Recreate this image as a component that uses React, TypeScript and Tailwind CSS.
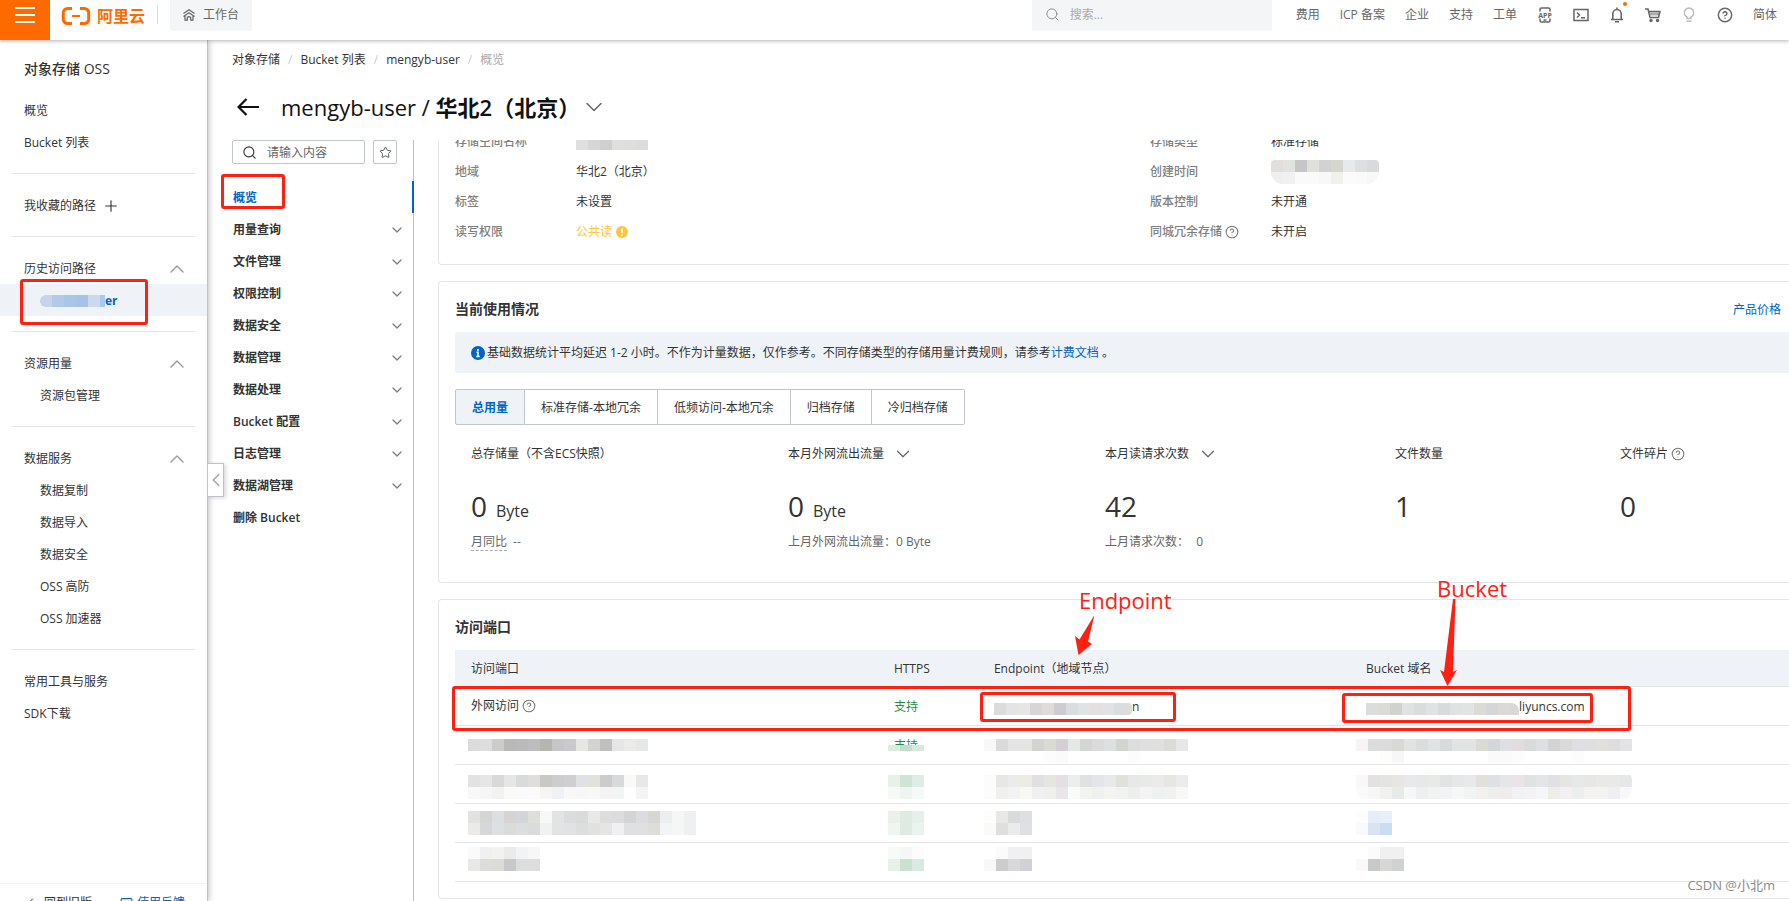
import type { ReactNode } from "react";
import {
  ChevronDown,
  ChevronLeft,
  ChevronUp,
  CircleHelp,
  MessageSquare,
  Plus,
  Search,
  Star,
  Undo2,
} from "lucide-react";

const topLinks = ["费用", "ICP 备案", "企业", "支持", "工单"];

const sideSections = [
  { title: "资源用量", items: ["资源包管理"] },
  { title: "数据服务", items: ["数据复制", "数据导入", "数据安全", "OSS 高防", "OSS 加速器"] },
];

const bucketMenu = [
  "用量查询",
  "文件管理",
  "权限控制",
  "数据安全",
  "数据管理",
  "数据处理",
  "Bucket 配置",
  "日志管理",
  "数据湖管理",
];

const storageTabs = ["总用量", "标准存储-本地冗余", "低频访问-本地冗余", "归档存储", "冷归档存储"];

interface MosaicProps {
  rows: string[];
  height?: number;
  offset?: number;
  className?: string;
}

// each row is a space separated list of 12px block colours, "-" leaves a gap
function Mosaic({ rows, height = 12, offset = 0, className = "" }: MosaicProps) {
  const cells = rows.map((row) => row.split(" "));
  const width = Math.max(...cells.map((row) => row.length)) * 12;
  return (
    <svg
      width={width}
      height={height}
      shapeRendering="crispEdges"
      aria-hidden="true"
      className={`block shrink-0 ${className}`}
    >
      {cells.map((row, y) =>
        row.map((color, x) =>
          color === "-" ? null : (
            <rect key={`${x}-${y}`} x={x * 12} y={offset + y * 12} width={12} height={12} fill={`#${color}`} />
          )
        )
      )}
    </svg>
  );
}

function MaskedCell({ rows, offset, className = "", children }: MosaicProps & { children?: ReactNode }) {
  return (
    <td className="relative h-[39px] border-b border-[#e3e4e6] p-0 pl-4">
      {children}
      <Mosaic rows={rows} offset={offset} height={38} className={`absolute top-0 ${className}`} />
    </td>
  );
}

function Help() {
  return <CircleHelp size={14} strokeWidth={1.8} className="ml-[3px] shrink-0 text-[#777]" />;
}

function MarkBox({ className }: { className: string }) {
  return <span className={`pointer-events-none absolute rounded-[3px] border-3 border-[#ff2012] ${className}`} />;
}

function TopBar() {
  return (
    <header className="relative z-20 flex h-10 shrink-0 items-start bg-white pr-3 text-[#666] shadow-[0_1px_4px_rgba(0,0,0,0.3)]">
      <button aria-label="菜单" className="flex h-10 w-[50px] items-start justify-center bg-[#ff6a00] pt-[6px]">
        <svg width="20" height="18" viewBox="0 0 20 18" stroke="#fff" strokeWidth="2">
          <path d="M0 2h20M0 9h20M0 16h20" />
        </svg>
      </button>
      <a href="#" className="ml-[11px] mt-1 flex h-6 items-center gap-[6px] text-[#ff6a00]">
        <svg width="30" height="20" viewBox="0 0 30 20" fill="none" stroke="currentColor">
          <path
            strokeWidth="3"
            d="M11 2.500H6.500Q3.200 2.800 2.300 6v8q.9 3.200 4.200 3.500H11M19 2.500h4.500q3.300.3 4.200 3.500v8q-.9 3.200-4.200 3.500H19"
          />
          <path strokeWidth="2" d="M11 10h8" />
        </svg>
        <span className="text-base font-bold leading-6">阿里云</span>
      </a>
      <span className="ml-3 mt-[6px] h-[18px] w-px bg-[#ddd]" />
      <button className="ml-3 flex h-[31px] w-[82px] items-center justify-center gap-2 rounded-b-[2px] bg-[#f4f5f7] pb-[2px]">
        <svg width="12" height="12" viewBox="0 0 12 12" fill="none" stroke="currentColor" strokeWidth="1.200">
          <path d="M.5 4.500 6 .7l5.500 3.800M.5 7.500 6 3.700l5.500 3.800M2 6.500v4.700h2.300V8.500q1.700-1.800 3.400 0v2.700H10V6.500" />
        </svg>
        工作台
      </button>
      <label className="ml-auto flex h-[31px] w-60 items-center gap-[10px] bg-[#f4f5f7] pb-[2px] pl-[13px]">
        <Search size={15} strokeWidth={1.5} className="shrink-0 text-[#888]" />
        <input
          aria-label="搜索"
          placeholder="搜索..."
          className="w-full bg-transparent outline-none placeholder:text-[#aaa]"
        />
      </label>
      <nav className="ml-6 flex h-[31px] items-center gap-5 pb-[2px]">
        {topLinks.map((label) => (
          <a key={label} href="#">
            {label}
          </a>
        ))}
        <button aria-label="APP">
          <svg width="16" height="16" viewBox="0 0 16 16" fill="none" stroke="currentColor" strokeWidth="1.500">
            <path d="M3 4.500V2.500Q3 1 4.500 1h7Q13 1 13 2.500v2M3 11.500v2Q3 15 4.500 15h7q1.500 0 1.500-1.500v-2M6.500 13h3" />
            <text x="8" y="10.500" fontSize="7" fontWeight="700" textAnchor="middle" fill="currentColor" stroke="none">
              APP
            </text>
          </svg>
        </button>
        <button aria-label="Cloud Shell">
          <svg width="16" height="16" viewBox="0 0 16 16" fill="none" stroke="currentColor" strokeWidth="1.500">
            <path d="M1 2.500h14v11H1zM4 5.500 6.500 8 4 10.500M8 10.700h4" />
          </svg>
        </button>
        <button aria-label="消息" className="relative">
          <svg width="16" height="16" viewBox="0 0 16 16" fill="none" stroke="currentColor" strokeWidth="1.600">
            <path d="M8 .5v2M2 12.500h12M3.800 12.500V7a4.200 4.500 0 0 1 8.400 0v5.500M6 14.800h4" />
          </svg>
          <span className="absolute -top-[5px] left-[14px] size-1 rounded-full bg-[#ff6a00]" />
        </button>
        <button aria-label="购物车">
          <svg width="16" height="16" viewBox="0 0 16 16" fill="none" stroke="currentColor" strokeWidth="1.500">
            <path d="M0 2h3l2 8.500h8.500L15 4.500H3.800" />
            <path d="M4.500 7h9.500" strokeWidth="3" opacity=".55" />
            <circle cx="6" cy="13.500" r="1" fill="currentColor" />
            <circle cx="12.500" cy="13.500" r="1" fill="currentColor" />
          </svg>
        </button>
        <button aria-label="提示" className="text-[#bbb]">
          <svg width="16" height="16" viewBox="0 0 16 16" fill="none" stroke="currentColor" strokeWidth="1.500">
            <path d="M6 11.500V10a4.700 4.700 0 1 1 4 0v1.500zM5.500 14.200h5" />
          </svg>
        </button>
        <button aria-label="帮助">
          <CircleHelp size={16} strokeWidth={2.2} />
        </button>
        <button>简体</button>
      </nav>
    </header>
  );
}

function SideRow({ label, nested = false }: { label: string; nested?: boolean }) {
  return (
    <a href="#" className={`flex h-8 items-center pt-[2px] ${nested ? "pl-10" : "pl-6"}`}>
      {label}
    </a>
  );
}

function SideTitle({ label }: { label: string }) {
  return (
    <button className="flex h-8 w-full items-center justify-between pl-6 pr-[18px] pt-[2px]">
      {label}
      <ChevronUp size={24} strokeWidth={1.4} className="text-[#999]" />
    </button>
  );
}

function SideRule() {
  return <hr className="my-[15px] ml-3 mr-3 border-[#e3e4e6]" />;
}

function Sidebar() {
  return (
    <aside className="relative z-10 flex w-52 shrink-0 flex-col border-r border-[#c1c1c8] bg-white shadow-[1px_0_6px_rgba(0,0,0,0.25)]">
      <h2 className="mb-[14px] mt-[17px] pl-6 text-sm font-medium leading-[23px]">对象存储 OSS</h2>
      <SideRow label="概览" />
      <SideRow label="Bucket 列表" />
      <SideRule />
      <button className="flex h-8 items-center gap-[6px] pl-6 pt-[2px]">
        我收藏的路径
        <Plus size={18} strokeWidth={1.5} />
      </button>
      <SideRule />
      <SideTitle label="历史访问路径" />
      <a href="#" className="relative flex h-8 items-center bg-[#eff3f8] pl-10 pt-[2px] font-bold text-[#0064c8]">
        <Mosaic rows={["c5d4e8 b2c9e9 a9c6e9 a6c3e6 c9daee abc9e8"]} className="w-[65px] rounded-l-md" />
        er
        <MarkBox className="-bottom-[9px] -top-[5px] left-5 w-32" />
      </a>
      {sideSections.map((section) => (
        <div key={section.title}>
          <SideRule />
          <SideTitle label={section.title} />
          {section.items.map((item) => (
            <SideRow key={item} label={item} nested />
          ))}
        </div>
      ))}
      <SideRule />
      <SideRow label="常用工具与服务" />
      <SideRow label="SDK下载" />
      <div className="mt-auto flex h-[18px] items-start gap-7 overflow-hidden border-t border-[#f3f3f3] pl-7 pt-[11px]">
        <a href="#" className="flex shrink-0 items-center gap-1 leading-4">
          <Undo2 size={12} />
          回到旧版
        </a>
        <a href="#" className="flex shrink-0 items-center gap-1 leading-4 text-[#0064c8]">
          <MessageSquare size={13} />
          使用反馈
        </a>
      </div>
      <button
        aria-label="收起"
        className="absolute left-full top-[423px] flex h-[34px] w-[17px] items-center justify-center border border-[#c1c1c8] bg-white text-[#aaa] shadow-[2px_1px_4px_rgba(0,0,0,0.15)]"
      >
        <ChevronLeft size={22} strokeWidth={1.8} className="shrink-0" />
      </button>
    </aside>
  );
}

function BucketNav() {
  return (
    <div className="w-[182px] shrink-0 border-r border-[#c0c0c4]">
      <div className="flex gap-2">
        <label className="flex h-6 w-[133px] items-center gap-[10px] rounded-[2px] border border-[#c0c4cc] pl-[9px] pt-px">
          <Search size={15} strokeWidth={1.8} className="shrink-0" />
          <input
            aria-label="搜索菜单"
            placeholder="请输入内容"
            className="w-full bg-transparent outline-none placeholder:text-[#666]"
          />
        </label>
        <button
          aria-label="收藏"
          className="flex size-6 items-center justify-center rounded-[2px] border border-[#c0c4cc] text-[#555]"
        >
          <Star size={13} strokeWidth={1.8} />
        </button>
      </div>
      <ul className="mt-[17px] font-semibold">
        <li className="relative">
          <a href="#" className="flex h-8 items-center pl-px pt-[2px] text-[#0064c8]">
            概览
          </a>
          <span className="absolute -right-px top-0 h-8 w-[2px] bg-[#0064c8]" />
          <MarkBox className="-left-[11px] -top-[7px] h-[35px] w-16" />
        </li>
        {bucketMenu.map((label) => (
          <li key={label}>
            <button className="flex h-8 w-full items-center justify-between pl-px pr-2 pt-[2px]">
              {label}
              <ChevronDown size={16} strokeWidth={1.8} className="text-[#777]" />
            </button>
          </li>
        ))}
        <li>
          <a href="#" className="flex h-8 items-center pl-px pt-[2px]">
            删除 Bucket
          </a>
        </li>
      </ul>
    </div>
  );
}

function InfoRow({ label, children }: { label: ReactNode; children: ReactNode }) {
  return (
    <div className="flex h-[30px] items-center">
      <dt className="flex w-[121px] shrink-0 items-center font-medium text-[#808080]">{label}</dt>
      <dd className="flex items-center">{children}</dd>
    </div>
  );
}

interface StatProps {
  label: ReactNode;
  value: string;
  unit?: string;
  children?: ReactNode;
}

function Stat({ label, value, unit, children }: StatProps) {
  return (
    <div>
      <div className="flex h-[26px] items-center">{label}</div>
      <div className="mt-[19px] h-10 text-[28px] leading-10">
        {value}
        {unit && <span className="ml-[9px] text-base">{unit}</span>}
      </div>
      <div className="mt-[6px] h-5 leading-5 text-[#666]">{children}</div>
    </div>
  );
}

function StatSelect({ label }: { label: string }) {
  return (
    <button className="flex items-center gap-2">
      {label}
      <ChevronDown size={22} strokeWidth={1.3} className="text-[#666]" />
    </button>
  );
}

function UsagePanel() {
  return (
    <section className="mt-4 rounded-l border border-r-0 border-[#e3e4e6] pb-[30px] pl-4 pt-4">
      <div className="flex items-center justify-between pr-2">
        <h3 className="text-sm font-semibold leading-[22px]">当前使用情况</h3>
        <a href="#" className="pt-[2px] text-[#0064c8]">
          产品价格
        </a>
      </div>
      <div className="mt-3 flex h-[41px] items-center rounded-l-[2px] bg-[#eff3f8] pl-4">
        <svg width="14" height="14" viewBox="0 0 14 14" className="mr-[2px] shrink-0">
          <circle cx="7" cy="7" r="7" fill="#0064c8" />
          <path d="M7 3v2M5.500 6.300H7v4M5.300 10.500h3.400" stroke="#fff" strokeWidth="1.600" fill="none" />
        </svg>
        <p>
          基础数据统计平均延迟 1-2 小时。不作为计量数据，仅作参考。不同存储类型的存储用量计费规则，请参考
          <a href="#" className="text-[#0064c8]">
            计费文档
          </a>{" "}
          。
        </p>
      </div>
      <div className="mt-4 flex h-9">
        {storageTabs.map((tab, i) => (
          <button
            key={tab}
            className={`border border-l-0 border-[#c0c4cc] px-4 pt-px first:rounded-l-[2px] first:border-l last:rounded-r-[2px] ${
              i === 0 ? "bg-[#eff3f8] font-semibold text-[#0064c8]" : ""
            }`}
          >
            {tab}
          </button>
        ))}
      </div>
      <div className="mt-4 grid grid-cols-[317fr_317fr_290fr_225fr_169fr] pl-4">
        <Stat label="总存储量（不含ECS快照）" value="0" unit="Byte">
          <span className="border-b border-dashed border-[#aaa]">月同比</span>
          <span className="ml-[6px]">--</span>
        </Stat>
        <Stat label={<StatSelect label="本月外网流出流量" />} value="0" unit="Byte">
          上月外网流出流量：0 Byte
        </Stat>
        <Stat label={<StatSelect label="本月读请求次数" />} value="42">
          上月请求次数： <span className="ml-1">0</span>
        </Stat>
        <Stat label="文件数量" value="1" />
        <Stat
          label={
            <>
              文件碎片
              <Help />
            </>
          }
          value="0"
        />
      </div>
    </section>
  );
}

function EndpointTable() {
  return (
    <section className="mt-4 rounded-l border border-r-0 border-[#e3e4e6] pb-4 pl-4 pt-4">
      <h3 className="text-sm font-semibold leading-[22px]">访问端口</h3>
      <div className="relative mt-3">
        <table className="w-full table-fixed border-separate border-spacing-0 text-left">
          <thead>
            <tr className="bg-[#eff3f8]">
              <th className="h-[37px] w-[31.7%] border-b border-[#e3e4e6] p-0 pl-4 pt-[2px] font-normal">访问端口</th>
              <th className="w-[7.5%] border-b border-[#e3e4e6] p-0 pl-4 pt-[2px] font-normal">HTTPS</th>
              <th className="relative w-[27.9%] border-b border-[#e3e4e6] p-0 pl-4 pt-[2px] font-normal">
                Endpoint（地域节点）
                <span className="absolute -top-[65px] left-[101px] text-[22px] leading-[30px] text-[#ff2012]">
                  Endpoint
                </span>
                <svg width="20" height="40" className="absolute -top-[35px] left-24" fill="#ff2012">
                  <path d="M20.500 0 14 26.500l4 2.500L4.500 40 1 21l4.500 3.500z" />
                </svg>
              </th>
              <th className="relative border-b border-[#e3e4e6] p-0 pl-4 pt-[2px] font-normal">
                Bucket 域名
                <span className="absolute -top-[77px] left-[87px] text-[22px] leading-[30px] text-[#ff2012]">
                  Bucket
                </span>
                <svg width="18" height="88" className="absolute -top-[51px] left-[90px]" fill="#ff2012">
                  <path d="M13 0h2.500L13 73l4-2L7.500 87 0 71l4 2z" />
                </svg>
              </th>
            </tr>
          </thead>
          <tbody>
            <tr>
              <td className="h-[39px] border-b border-[#e3e4e6] p-0 pl-4">
                <span className="flex items-center">
                  外网访问
                  <Help />
                </span>
              </td>
              <td className="border-b border-[#e3e4e6] p-0 pl-4 pt-[2px] text-[#1e8e3e]">支持</td>
              <td className="relative border-b border-[#e3e4e6] p-0 pl-4 pt-[2px]">
                <span className="flex items-center">
                  <Mosaic
                    rows={["dcdcdc e3e4e5 e6e6e5 d8d5d7 dddcd8 d0cad1 dadddf dfe3e3 e4e0e1 e1e2e3 dadddf dcdcdc"]}
                    className="mt-1 w-[138px] rounded-r"
                  />
                  n
                </span>
                <MarkBox className="left-[2px] top-[5px] h-[30px] w-[196px]" />
              </td>
              <td className="relative border-b border-[#e3e4e6] p-0 pl-4 pt-[2px]">
                <span className="flex items-center">
                  <Mosaic
                    rows={[
                      "dadddb dadbd9 d1d2ce e1e2e4 dadddc e0e2e3 d9dadb dfe1e4 e2e4e3 dcdad5 d4d6da dad9d5 dad7d8 d9d4d9",
                    ]}
                    className="mt-1 w-[153px] rounded-tr-lg"
                  />
                  liyuncs.com
                </span>
                <MarkBox className="-left-2 top-[6px] h-[30px] w-[251px]" />
              </td>
            </tr>
            <tr>
              <MaskedCell
                className="left-[13px]"
                offset={13}
                rows={["dcdcda dddddd cccccd b9b9b8 bababa bdbdc1 b5b6b0 c6c6c8 c9c8cb e6e6e5 d3d3d2 c1c0c0 e4e6e5 ebebea e5e7e8"]}
              />
              <td className="relative border-b border-[#e3e4e6] p-0 pl-4 pt-[2px] text-[#1e8e3e]">
                支持
                <span className="absolute left-[10px] top-[19px] flex h-4 w-9 bg-white">
                  <span className="h-[6px] w-3 bg-[#deeae0]" />
                  <span className="h-[6px] w-3 bg-[#c3dccb]" />
                  <span className="h-[6px] w-3 bg-[#d7e9df]" />
                </span>
              </td>
              <MaskedCell
                className="left-[6px]"
                offset={13}
                rows={[
                  "f8f8f8 dadbd9 e3e4e3 e4e4e2 d5d3d1 dadad5 d4cfd5 e5e8e6 d3d6d3 dbdbde dedfe0 d2d4cf dddddd dfdfe0 dfe1e1 dbdbd8 e7e7e9",
                  "- - - - - fcfcfc fafafa - - - - - fcfcfc",
                ]}
              />
              <MaskedCell
                className="left-[6px] rounded-l-xl"
                offset={13}
                rows={[
                  "f8f4f5 dadddb dcdcda d8d8d4 e2e2e3 dadddc e0e2e3 d9dadb e2e4e3 e2e4e3 dcdad5 d4d6da dedfe2 e2dce1 d8dbd9 dedfe0 d4d2d5 dadada dddfe2 e0dfdf e1e0dd dedddd e2e3e5",
                  "- - fdfdfc f7f7f7 - - - - - - - fafafa fafafa fcfcfc - - - - fcfcfc",
                ]}
              />
            </tr>
            <tr>
              <MaskedCell
                className="left-[13px]"
                offset={10}
                rows={[
                  "e2e2e3 e6e6e7 d9d9d9 e6e6e4 d9dadb dfdedc c8c9c4 cbcecc d0ced1 e0e1e4 e2e2dd cccccd d8d9da f9faf8 e8e8e8",
                  "f8f8f8 f6f6f6 f2f2f1 fafaf9 fafafa fbfbfb f7f5f4 f0f1f5 f8f8f8 f7f7f8 f8f8f8 f4f4f4 f3f4f4 fefefe f4f4f4",
                ]}
              />
              <MaskedCell className="left-[10px]" offset={10} rows={["e9f0e9 cfe4d7 deede6", "f6f9f6 eef4ef f5faf8"]} />
              <MaskedCell
                className="left-[6px]"
                offset={10}
                rows={[
                  "fcfcfb e7e8e5 ebebeb ecece7 e2dfe3 e5e5e2 e3dfe3 eceeed e0e2e1 e4e5e8 e8e9ea dfe1dc e8e8e8 e8eae8 ebebeb e6e6e3 ebecec",
                  "fcfcfc f0f0f0 f3f3f3 f8f8f5 f1f0f1 efefed e8e6e9 f9fbfa f3f3f2 f0f0f1 f4f4f2 f1f2f2 eeeeee f4f4f4 eff1f1 eff2f0 f8f8f8",
                ]}
              />
              <MaskedCell
                className="left-[6px] rounded-2xl"
                offset={10}
                rows={[
                  "f9f7f8 e2e3e1 e4e4e2 e7e6e2 e8e9ea e7e8e9 e8eae8 e2e3e3 e6e8e7 e8e9ea e2e0dc dfe0e3 e6e5e8 e8e4e7 e1e2e2 e4e5e6 e0e1e4 e5e5e3 e7e8e9 e7e7e5 e9e9e8 e9eae7 e6e7e9",
                  "fbfafb f6f7f6 f1f1f2 e6eae8 f5f8f7 eef0f0 f1f3f2 f2f3f4 f5f8f7 f2f4f3 f2f1ef edeeed efecec f2f1f4 f3f3f6 f5f6f7 eeedea f2f0f1 ecefee f4f3f1 f3f3f4 efeff1 f8f8f8",
                ]}
              />
            </tr>
            <tr>
              <MaskedCell
                className="left-[13px]"
                offset={7}
                rows={[
                  "e2e2e2 d5d5d4 dddee1 d5d4d2 d4d5d8 dededb f8f8f8 e2e3e3 dadcde dadada e8e7e9 dddddd dcdcdd d3d4d6 dcdbdf d6d6d4 ebedee f6f6f6 eff0f1",
                  "ebeae8 d7d7d9 dddfe1 dadcd9 dcdddd d9dcdb f1f1f2 e2e3e3 e0e3e2 dcdddd e1e1e0 e5e5e3 f0f0f2 dfe0e1 dfe0e1 dddeda f3f4f6 f6f6f6 eff0f0",
                ]}
              />
              <MaskedCell className="left-[10px]" offset={7} rows={["ebf1ea deebe3 e5f0eb", "eff5f1 dfeae2 e9f3ef"]} />
              <MaskedCell className="left-[6px]" offset={7} rows={["fdfdfc e8e8e7 d9dadb dedfe1", "fafaf9 dfdfdd ebebec dfe0e3"]} />
              <MaskedCell className="left-[6px]" offset={7} rows={["fdfdfd e6edf8 e7effa", "f9fafd d9e3f2 cbddf3"]} />
            </tr>
            <tr>
              <MaskedCell
                className="left-[13px]"
                offset={4}
                rows={["fafafa f0f0f0 f2f2f1 ebebec f2f3f4 f7f7f7", "e8e8e7 dcdddb dcdbd7 c6c8ca dcdedd dedddd"]}
              />
              <MaskedCell className="left-[10px]" offset={4} rows={["f7faf7 f3f7f6 fdfdfd", "e8f0e9 cae0d1 d9eae2"]} />
              <MaskedCell className="left-[6px]" offset={4} rows={["- fbfbfa f0f0f0 f0f0f1", "f8f8f8 cbcccb d9d7d9 d0d1d5"]} />
              <MaskedCell className="left-[6px]" offset={4} rows={["- fbfbfa f0f0f0 f0f0f1", "faf9f8 c8cac9 d8d7d6 d0d1d3"]} />
            </tr>
          </tbody>
        </table>
        <MarkBox className="-left-[3px] right-[158px] top-9 h-[45px]" />
      </div>
    </section>
  );
}

export default function App() {
  return (
    <div className="relative flex h-screen flex-col overflow-hidden bg-white font-['Open_Sans','Noto_Sans_CJK_SC',sans-serif] text-xs text-[#333]">
      <TopBar />
      <div className="flex min-h-0 flex-1">
        <Sidebar />
        <main className="flex min-w-0 flex-1 flex-col pl-6 pt-[10px]">
          <nav className="flex h-5 items-center gap-2">
            <a href="#">对象存储</a>
            <span className="text-[#ccc]">/</span>
            <a href="#">Bucket 列表</a>
            <span className="text-[#ccc]">/</span>
            <a href="#">mengyb-user</a>
            <span className="text-[#ccc]">/</span>
            <span className="text-[#aaa]">概览</span>
          </nav>
          <div className="mb-4 mt-5 flex h-[34px] shrink-0 items-center text-[#111]">
            <a href="#" aria-label="返回" className="ml-[5px]">
              <svg width="22" height="18" viewBox="0 0 22 18" fill="none" stroke="currentColor" strokeWidth="2.200">
                <path d="M22 9H1.500M9.500 1 1.500 9l8 8" />
              </svg>
            </a>
            <h1 className="ml-[22px] text-[22px] font-medium leading-[34px]">
              mengyb-user / <span className="font-semibold">华北2（北京）</span>
            </h1>
            <button aria-label="切换 Bucket">
              <ChevronDown size={28} strokeWidth={1.3} className="text-[#666]" />
            </button>
          </div>
          <div className="flex min-h-0 flex-1">
            <BucketNav />
            <div className="ml-6 min-w-0 flex-1 overflow-hidden">
              <section className="-mt-[14px] grid grid-cols-[52.1%_1fr] rounded-l border border-r-0 border-[#e3e4e6] pb-[17px] pl-4">
                <dl>
                  <InfoRow label="存储空间名称">
                    <Mosaic rows={["dfdfdf d6d6d6 cfcfd0 e0dfde dfdedd dbdddd"]} className="mt-1 rounded-t" />
                  </InfoRow>
                  <InfoRow label="地域">华北2（北京）</InfoRow>
                  <InfoRow label="标签">未设置</InfoRow>
                  <InfoRow label="读写权限">
                    <span className="text-[#ffc440]">公共读</span>
                    <svg width="12" height="12" viewBox="0 0 12 12" className="ml-1">
                      <circle cx="6" cy="6" r="6" fill="#ffc440" />
                      <path d="M6 2.500v4.500M6 8.200v1.500" stroke="#fff" strokeWidth="1.600" />
                    </svg>
                  </InfoRow>
                </dl>
                <dl>
                  <InfoRow label="存储类型">标准存储</InfoRow>
                  <InfoRow label="创建时间">
                    <Mosaic
                      height={24}
                      rows={[
                        "e2dedb e1e3e0 c6c6c9 dfdfdc d2d2d0 d4d6d0 e8e9ea dedfe0 dadadc",
                        "efeff0 f1f1f1 fafafb fafafa f8f8f8 f0f0ed fbfbfb fafafa f8f8f8",
                      ]}
                      className="rounded-xl rounded-t"
                    />
                  </InfoRow>
                  <InfoRow label="版本控制">未开通</InfoRow>
                  <InfoRow
                    label={
                      <>
                        同城冗余存储
                        <Help />
                      </>
                    }
                  >
                    未开启
                  </InfoRow>
                </dl>
              </section>
              <UsagePanel />
              <EndpointTable />
            </div>
          </div>
        </main>
      </div>
      <span className="absolute bottom-[6px] right-[14px] z-30 text-[13px] leading-5 text-[#8a8a8a]">CSDN @小北m</span>
    </div>
  );
}
